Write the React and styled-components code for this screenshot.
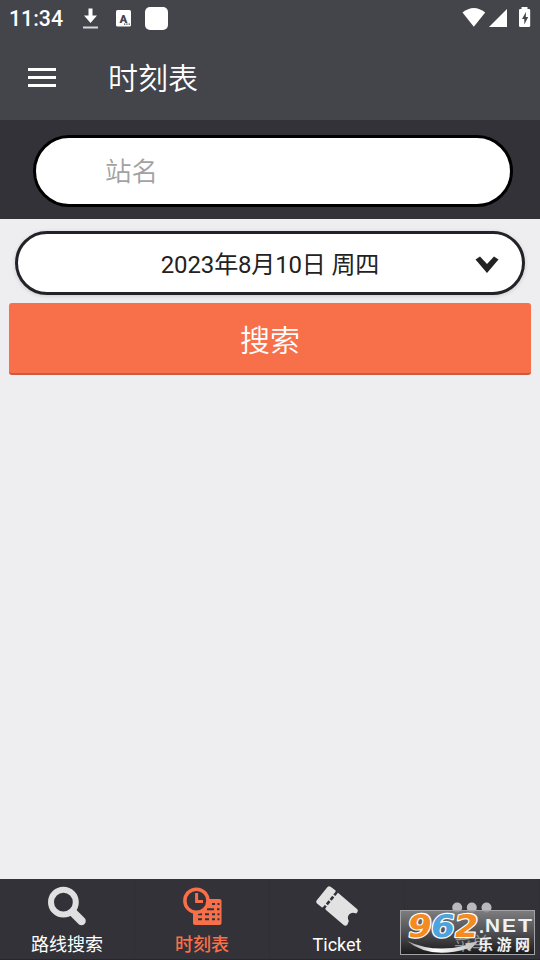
import React from 'react';
import styled, { createGlobalStyle } from 'styled-components';

const GlobalStyle = createGlobalStyle`
  * {
    box-sizing: border-box;
  }

  body {
    margin: 0;
    background-color: #EEEEF0;
    font-family: Roboto, "Noto Sans CJK SC", sans-serif;
  }
`;

const Screen = styled.div`
  display: flex;
  flex-direction: column;
  width: 540px;
  height: 960px;
  overflow: hidden;
  background-color: #EEEEF0;
`;

const StatusBar = styled.div`
  display: flex;
  align-items: center;
  height: 36px;
  padding: 0 9px;
  background-color: #44444B;
  color: #FFF;
`;

const Clock = styled.span`
  width: 71px;
  font-size: 21.3px;
  font-weight: 500;
  line-height: 24px;
  padding-top: 2px;
`;

const StatusIcons = styled.svg`
  display: block;
  margin-left: ${props => props.$push ? 'auto' : '0'};
`;

const Header = styled.header`
  display: flex;
  align-items: center;
  height: 84px;
  padding-left: 28px;
  background-color: #44444B;
`;

const MenuButton = styled.button`
  display: flex;
  flex-direction: column;
  justify-content: space-between;
  width: 28px;
  height: 19px;
  margin: 0 52px 1px 0;
  padding: 0;
  border: none;
  background: transparent;
`;

const MenuLine = styled.span`
  width: 28px;
  height: 3px;
  background-color: #FFF;
`;

const Title = styled.h1`
  margin: 2px 0 0;
  color: #FFF;
  font-size: 30px;
  font-weight: 350;
  line-height: 40px;
`;

const StationBar = styled.div`
  height: 99px;
  padding: 15px 27px 12px 33px;
  background-color: #323238;
`;

const StationInput = styled.input`
  display: block;
  width: 100%;
  height: 72px;
  padding: 1px 69px 0;
  border: 3px solid #000;
  border-radius: 36px;
  outline: none;
  background-color: #FFF;
  color: #222;
  font-family: inherit;
  font-size: 26.5px;
  font-weight: 350;

  &::placeholder {
    color: #A2A2A2;
    opacity: 1;
  }
`;

const Form = styled.main`
  display: flex;
  flex-direction: column;
  flex: 1;
  padding: 12px 9px;
`;

const DateSelect = styled.button`
  display: grid;
  grid-template-columns: 1fr auto 1fr;
  align-items: center;
  height: 64px;
  margin: 0 6px 8px;
  padding: 0 23px;
  border: 3px solid #222228;
  border-radius: 32px;
  background-color: #FFF;
  box-shadow: 0 1px 4px rgba(0, 0, 0, 0.15);
  color: #222;
  font-family: inherit;
  font-size: 24px;
`;

const DateText = styled.span`
  grid-column: 2;
  padding-bottom: 1px;
  letter-spacing: -0.15px;
  white-space: nowrap;
`;

const Arrow = styled.svg`
  display: block;
  justify-self: end;
  margin-top: 4px;
`;

const SearchButton = styled.button`
  height: 72px;
  padding: 0;
  border: none;
  border-bottom: 2px solid #CB5A3E;
  border-radius: 3px;
  background-color: #F8704A;
  color: #FFF;
  font-family: inherit;
  font-size: 30px;
  font-weight: 350;
`;

const TabBar = styled.nav`
  position: relative;
  display: grid;
  grid-template-columns: repeat(4, 135px);
  height: 81px;
  background-color: #323238;
  border-bottom: 1px solid #29262B;
`;

const Tab = styled.div`
  display: flex;
  flex-direction: column;
  align-items: center;
  border-right: 1px solid #2F2F35;
  color: ${props => props.$active ? '#F8704A' : '#FFF'};
`;

const TabIcon = styled.svg`
  display: block;
  margin-top: 5px;
`;

const TabLabel = styled.span`
  margin-top: 1px;
  font-size: 18px;
  font-weight: ${props => props.$active ? 500 : 400};
  line-height: 24px;
`;

const Watermark = styled.svg`
  position: absolute;
  right: 5px;
  bottom: 4px;
`;

const SearchIcon = () => (
  <TabIcon width="48" height="48" viewBox="0 0 48 48" fill="none" stroke="#E0E0E0">
    <circle cx="20.4" cy="18.2" r="12.4" strokeWidth="6" />
    <path d="M30 28.5 L38.5 37" strokeWidth="8.5" strokeLinecap="round" />
  </TabIcon>
);

const TimetableIcon = () => (
  <TabIcon width="48" height="48" viewBox="0 0 48 48">
    <path d="M18 15H41.5a2 2 0 0 1 2 2V39a2 2 0 0 1-2 2H17a2 2 0 0 1-2-2V15Z" fill="#F8704A" />
    <path
      d="M34 20h3M39.500 20h2M29 25.2h7M39 25.2h2.500M20 30.2h4M27 30.2h4M34 30.2h3M39.500 30.2h2M20 35.3h4M27 35.3h4M34 35.3h3M39.500 35.3h2"
      stroke="#323238"
      strokeWidth="2"
    />
    <circle cx="18.4" cy="16.7" r="13.3" fill="#F8704A" />
    <circle cx="18.4" cy="16.7" r="9.8" fill="#323238" />
    <path d="M18.6 9V17.5H25" fill="none" stroke="#F8704A" strokeWidth="3" />
  </TabIcon>
);

const TicketIcon = () => (
  <TabIcon width="48" height="48" viewBox="0 0 48 48">
    <path
      d="M14.5 3 Q16 1.700 17.600 2.800 L22.600 6.500 Q22.300 9.500 25 8.700 L44.300 25.300 Q45.500 26.700 44.300 28.200 L43.200 29.500 Q38.800 27.500 36.300 30.300 Q33.700 33 35.800 37 L34.500 40.500 Q32.800 42.700 30.600 41.100 L13 26 Q12 22.500 9 23.500 L4 19.500 Q2.400 18.200 3.600 16.600 Z"
      fill="#E2E2E2"
    />
    <path d="M24 8 L10.500 24.500" stroke="#323238" strokeWidth="2.600" strokeDasharray="4.200 1.700" />
  </TabIcon>
);

const MoreIcon = () => (
  <TabIcon width="48" height="48" viewBox="0 0 48 48" fill="#B9B9BB">
    <circle cx="9.200" cy="23.500" r="5" />
    <circle cx="23.800" cy="23.500" r="5" />
    <circle cx="38.500" cy="23.500" r="5" />
  </TabIcon>
);

const SiteMark = () => (
  <Watermark width="135" height="45" viewBox="0 0 135 45">
    <defs>
      <linearGradient id="plate" x1="0" y1="0" x2="0" y2="1">
        <stop offset="0" stopColor="#8B8B8D" />
        <stop offset="0.5" stopColor="#555558" />
        <stop offset="1" stopColor="#161618" />
      </linearGradient>
      <linearGradient id="swoosh" x1="0" y1="0" x2="1" y2="0">
        <stop offset="0" stopColor="#999" />
        <stop offset="0.4" stopColor="#FFF" />
        <stop offset="1" stopColor="#BBB" />
      </linearGradient>
    </defs>
    <rect x="0.5" y="0.5" width="134" height="44" fill="url(#plate)" fillOpacity="0.85" stroke="#A3A3A5" />
    <text x="54" y="40" fontSize="18" fill="#929294" fontFamily="Noto Sans CJK SC, sans-serif">菜单</text>
    <path d="M7 31 Q34 43.500 66 35.500 L65 33.500 L78 31.500 L69 41 L67.500 38.500 Q31 50 7 31Z" fill="url(#swoosh)" />
    <g
      fontFamily="DejaVu Sans, sans-serif"
      fontSize="31"
      fontWeight="700"
      stroke="#FFF"
      strokeWidth="2.4"
      strokeLinejoin="round"
      paintOrder="stroke"
      transform="translate(2.500 0) skewX(-9)"
    >
      <text x="8" y="27" fill="#F58A1F" textLength="24" lengthAdjust="spacingAndGlyphs">9</text>
      <text x="31" y="27" fill="#4EA3DC" textLength="24" lengthAdjust="spacingAndGlyphs">6</text>
      <text x="54.500" y="27" fill="#F58A1F" textLength="24" lengthAdjust="spacingAndGlyphs">2</text>
    </g>
    <g fill="#F1F1F1" fontFamily="Liberation Sans, sans-serif" fontSize="18" fontWeight="700">
      <text x="79" y="23">.</text>
      <text x="85" y="22" textLength="15" lengthAdjust="spacingAndGlyphs">N</text>
      <text x="102" y="22" textLength="14" lengthAdjust="spacingAndGlyphs">E</text>
      <text x="118" y="22" textLength="14" lengthAdjust="spacingAndGlyphs">T</text>
    </g>
    <text x="78" y="40" fill="#F1F1F1" fontFamily="Noto Sans CJK SC, sans-serif" fontSize="15" fontWeight="700" textLength="52">乐游网</text>
  </Watermark>
);

export default class App extends React.Component {
  constructor () {
    super();
    this.state = {
      station: ''
    };

    this.handleStationChange = this.handleStationChange.bind(this);
  }

  handleStationChange (event) {
    this.setState({ station: event.target.value });
  }

  render () {
    return (
      <Screen>
        <GlobalStyle />
        <StatusBar>
          <Clock>11:34</Clock>
          <StatusIcons width="90" height="36" viewBox="80 0 90 36">
            <path d="M88.500 8.500h4v7h4.500l-6.500 7.500-6.500-7.500h4.500Z" fill="#FFF" />
            <path d="M83 27.500h15" stroke="#D8D8DA" strokeWidth="2" />
            <rect x="116" y="10" width="15" height="16.500" rx="1.500" fill="#FFF" />
            <text x="123.400" y="22.500" textAnchor="middle" fontSize="11.500" fontWeight="900" fill="#44444B">A</text>
            <path d="M124 24.200h6" stroke="#44444B" strokeWidth="1.300" strokeDasharray="1.300 1" />
            <rect x="145" y="7" width="23" height="23" rx="5" fill="#FFF" />
          </StatusIcons>
          <StatusIcons $push width="71" height="36" viewBox="460 0 71 36" fill="#FFF">
            <path d="M462.500 12.500Q473.800 3.500 485.200 12.500L473.800 26.800Z" />
            <path d="M507 9V27H489Z" />
            <path d="M521.500 7h6v2h1.500a1.200 1.200 0 0 1 1.200 1.200v15.600a1.200 1.200 0 0 1-1.200 1.200h-8.800a1.200 1.200 0 0 1-1.200-1.200V10.200a1.200 1.200 0 0 1 1.200-1.200h1.300Z" />
            <path d="M526 12l-4 7h2.300v5.500l3.900-7.500h-2.400Z" fill="#44444B" />
          </StatusIcons>
        </StatusBar>
        <Header>
          <MenuButton>
            <MenuLine />
            <MenuLine />
            <MenuLine />
          </MenuButton>
          <Title>时刻表</Title>
        </Header>
        <StationBar>
          <StationInput
            type="text"
            placeholder="站名"
            value={this.state.station}
            onChange={this.handleStationChange}
          />
        </StationBar>
        <Form>
          <DateSelect>
            <DateText>2023年8月10日 周四</DateText>
            <Arrow width="24" height="18" viewBox="0 0 24 18">
              <path d="M0.500 3.500L5 0.500L12 8L19 0.500L23.500 3.500L12 17Z" fill="#222" />
            </Arrow>
          </DateSelect>
          <SearchButton>搜索</SearchButton>
        </Form>
        <TabBar>
          <Tab>
            <SearchIcon />
            <TabLabel>路线搜索</TabLabel>
          </Tab>
          <Tab $active>
            <TimetableIcon />
            <TabLabel $active>时刻表</TabLabel>
          </Tab>
          <Tab>
            <TicketIcon />
            <TabLabel>Ticket</TabLabel>
          </Tab>
          <Tab>
            <MoreIcon />
          </Tab>
          <SiteMark />
        </TabBar>
      </Screen>
    );
  }
}
